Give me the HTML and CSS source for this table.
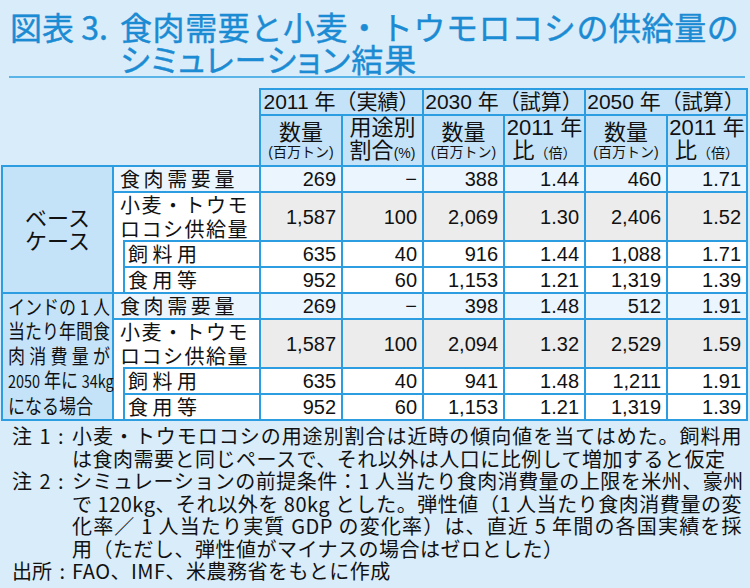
FILE: index.html
```html
<!DOCTYPE html>
<html lang="ja">
<head>
<meta charset="utf-8">
<title>図表3</title>
<link rel="stylesheet" href="styles.css">
</head>
<body>
<div class="page">
  <h1 class="title"><span class="fig">図表 3.</span><span class="ttl"><span class="l1">食肉需要と小麦・トウモロコシの供給量の</span><span class="l2">シミュレーション結果</span></span></h1>

  <table class="tbl">
    <colgroup>
      <col class="w-grp"><col class="w-ind"><col class="w-item">
      <col class="w-a"><col class="w-b"><col class="w-b"><col class="w-b"><col class="w-a"><col class="w-c">
    </colgroup>
    <thead>
      <tr class="hr1">
        <th class="blank" colspan="3" rowspan="2"></th>
        <th class="yr" colspan="2">2011 年（実績）</th>
        <th class="yr" colspan="2">2030 年（試算）</th>
        <th class="yr" colspan="2">2050 年（試算）</th>
      </tr>
      <tr class="hr2">
        <th><span class="hb">数量</span><span class="hs">(百万トン)</span></th>
        <th><span class="hb">用途別</span><span class="hb">割合<span class="hp">(%)</span></span></th>
        <th><span class="hb">数量</span><span class="hs">(百万トン)</span></th>
        <th><span class="hb">2011 年</span><span class="hb">比<span class="hq">（倍）</span></span></th>
        <th><span class="hb">数量</span><span class="hs">(百万トン)</span></th>
        <th><span class="hb">2011 年</span><span class="hb">比<span class="hq">（倍）</span></span></th>
      </tr>
    </thead>
    <tbody>
      <tr class="rm">
        <th class="gl" rowspan="4"><span class="gl1">ベース<br>ケース</span></th>
        <td class="item sp-m" colspan="2">食肉需要量</td>
        <td class="n">269</td><td class="n">−</td><td class="n">388</td><td class="n">1.44</td><td class="n">460</td><td class="n">1.71</td>
      </tr>
      <tr class="rs">
        <td class="item sp-s" colspan="2">小麦・トウモ<br>ロコシ供給量</td>
        <td class="n">1,587</td><td class="n">100</td><td class="n">2,069</td><td class="n">1.30</td><td class="n">2,406</td><td class="n">1.52</td>
      </tr>
      <tr class="rf">
        <td class="indent" rowspan="2"></td>
        <td class="item sp-f">飼料用</td>
        <td class="n">635</td><td class="n">40</td><td class="n">916</td><td class="n">1.44</td><td class="n">1,088</td><td class="n">1.71</td>
      </tr>
      <tr class="rf">
        <td class="item sp-f">食用等</td>
        <td class="n">952</td><td class="n">60</td><td class="n">1,153</td><td class="n">1.21</td><td class="n">1,319</td><td class="n">1.39</td>
      </tr>
    </tbody>
    <tbody>
      <tr class="rm">
        <th class="gl" rowspan="4">
          <div class="gl2">
            <div class="jl">インドの 1 人</div>
            <div class="jl">当たり年間食</div>
            <div class="jl">肉消費量が</div>
            <div class="jl"><span class="lat">2050</span> 年に <span class="lat">34kg</span></div>
            <div>になる場合</div>
          </div>
        </th>
        <td class="item sp-m" colspan="2">食肉需要量</td>
        <td class="n">269</td><td class="n">−</td><td class="n">398</td><td class="n">1.48</td><td class="n">512</td><td class="n">1.91</td>
      </tr>
      <tr class="rs">
        <td class="item sp-s" colspan="2">小麦・トウモ<br>ロコシ供給量</td>
        <td class="n">1,587</td><td class="n">100</td><td class="n">2,094</td><td class="n">1.32</td><td class="n">2,529</td><td class="n">1.59</td>
      </tr>
      <tr class="rf">
        <td class="indent" rowspan="2"></td>
        <td class="item sp-f">飼料用</td>
        <td class="n">635</td><td class="n">40</td><td class="n">941</td><td class="n">1.48</td><td class="n">1,211</td><td class="n">1.91</td>
      </tr>
      <tr class="rf">
        <td class="item sp-f">食用等</td>
        <td class="n">952</td><td class="n">60</td><td class="n">1,153</td><td class="n">1.21</td><td class="n">1,319</td><td class="n">1.39</td>
      </tr>
    </tbody>
  </table>

  <div class="notes">
    <div class="note">
      <div class="lab">注 1 :</div>
      <div class="txt">
        <div class="just">小麦・トウモロコシの用途別割合は近時の傾向値を当てはめた。飼料用</div>
        <div>は食肉需要と同じペースで、それ以外は人口に比例して増加すると仮定</div>
      </div>
    </div>
    <div class="note">
      <div class="lab">注 2 :</div>
      <div class="txt">
        <div class="just">シミュレーションの前提条件：1 人当たり食肉消費量の上限を米州、豪州</div>
        <div class="just">で 120kg、それ以外を 80kg とした。弾性値（1 人当たり食肉消費量の変</div>
        <div class="just">化率／ 1 人当たり実質 GDP の変化率）は、直近 5 年間の各国実績を採</div>
        <div>用（ただし、弾性値がマイナスの場合はゼロとした）</div>
      </div>
    </div>
    <div class="note">
      <div class="lab">出所 :</div>
      <div class="txt">
        <div>FAO、IMF、米農務省をもとに作成</div>
      </div>
    </div>
  </div>
</div>
</body>
</html>
```

FILE: styles.css
```css
html, body {
  margin: 0;
  padding: 0;
}
body {
  background: #d9ecf9;
  color: #111;
  font-family: "Liberation Sans", "Noto Sans CJK JP", sans-serif;
}
.page {
  width: 750px;
  height: 588px;
  overflow: hidden;
  background: #d9ecf9;
}

/* title */
.title {
  margin: 0 5px 0 9px;
  padding: 10px 0 2px 1px;
  display: flex;
  color: #1b8bd3;
  font-family: "Noto Sans CJK JP", sans-serif;
  font-weight: 400;
  font-size: 32px;
  line-height: 32px;
  -webkit-text-stroke: 0.4px #1b8bd3;
  border-bottom: 2px solid #5bb4e8;
}
.fig {
  flex: 0 0 110px;
  white-space: nowrap;
}
.ttl {
  display: flex;
  flex-direction: column;
}
.l1, .l2 {
  white-space: nowrap;
}
.l1 {
  letter-spacing: 0.6px;
}
.l2 {
  font-feature-settings: "palt";
  letter-spacing: 1px;
}

/* table */
.tbl {
  border-collapse: collapse;
  table-layout: fixed;
  width: 747px;
  margin: 10px 0 0 1px;
}
.w-grp { width: 111px; }
.w-ind { width: 11px; }
.w-item { width: 136px; }
.w-a { width: 82px; }
.w-b { width: 81px; }
.w-c { width: 80px; }

.tbl th, .tbl td {
  border: 2px solid #2b9de0;
  padding: 0;
  font-weight: normal;
  white-space: nowrap;
  overflow: visible;
}
.tbl .blank {
  border: none;
  background: transparent;
}
.hr1 { height: 26px; }
.hr2 { height: 50px; }
.tbl thead th {
  background: #c5e3f8;
  text-align: center;
  vertical-align: middle;
}
.yr {
  font-size: 21px;
  line-height: 22px;
}
.hb {
  display: block;
  font-size: 22px;
  line-height: 23px;
}
.hs {
  display: block;
  font-size: 14px;
  line-height: 16px;
}
.hp {
  font-size: 14px;
}
.hq {
  font-size: 14px;
}

.rm { height: 26px; }
.rs { height: 48px; }
.rf { height: 26px; }

.rm td { background: #ebf5fd; }
.rs td { background: #ececec; }
.rs td.item { background: #ffffff; }
.rf td { background: #ffffff; }

.indent {
  border-top: hidden !important;
  background: #ffffff;
}

.item {
  font-family: "Noto Sans CJK JP", sans-serif;
  font-size: 20px;
  line-height: 23.5px;
  text-align: left;
  vertical-align: middle;
}
.sp-m {
  padding-left: 6px !important;
  letter-spacing: 3.6px;
}
.sp-s {
  padding-left: 6px !important;
  letter-spacing: 1.5px;
}
.sp-f {
  padding-left: 3px !important;
  letter-spacing: 4.5px;
}

.n {
  text-align: right;
  padding-right: 5px !important;
  font-size: 20px;
  line-height: 22px;
  vertical-align: middle;
}

.gl {
  background: #c5e3f8;
  vertical-align: middle;
  text-align: center;
  font-family: "Noto Sans CJK JP", sans-serif;
}
.gl1 {
  display: inline-block;
  font-size: 22px;
  line-height: 23px;
  text-align: left;
}
.gl2 {
  width: 120px;
  margin-left: 5px;
  font-size: 20px;
  line-height: 24.5px;
  text-align: left;
  transform: scaleX(0.85);
  transform-origin: left center;
}
.jl {
  text-align: justify;
  text-align-last: justify;
  white-space: nowrap;
}
.lat {
  font-size: 17px;
}

/* notes */
.notes {
  padding: 4px 0 0 12px;
  font-family: "Noto Sans CJK JP", sans-serif;
  font-size: 20px;
  line-height: 22.5px;
}
.note {
  display: flex;
}
.lab {
  flex: 0 0 60px;
  white-space: nowrap;
  word-spacing: 3px;
}
.txt {
  width: 670px;
}
.txt div {
  white-space: nowrap;
  letter-spacing: 0.5px;
}
.txt .just {
  text-align: justify;
  text-align-last: justify;
}
```
